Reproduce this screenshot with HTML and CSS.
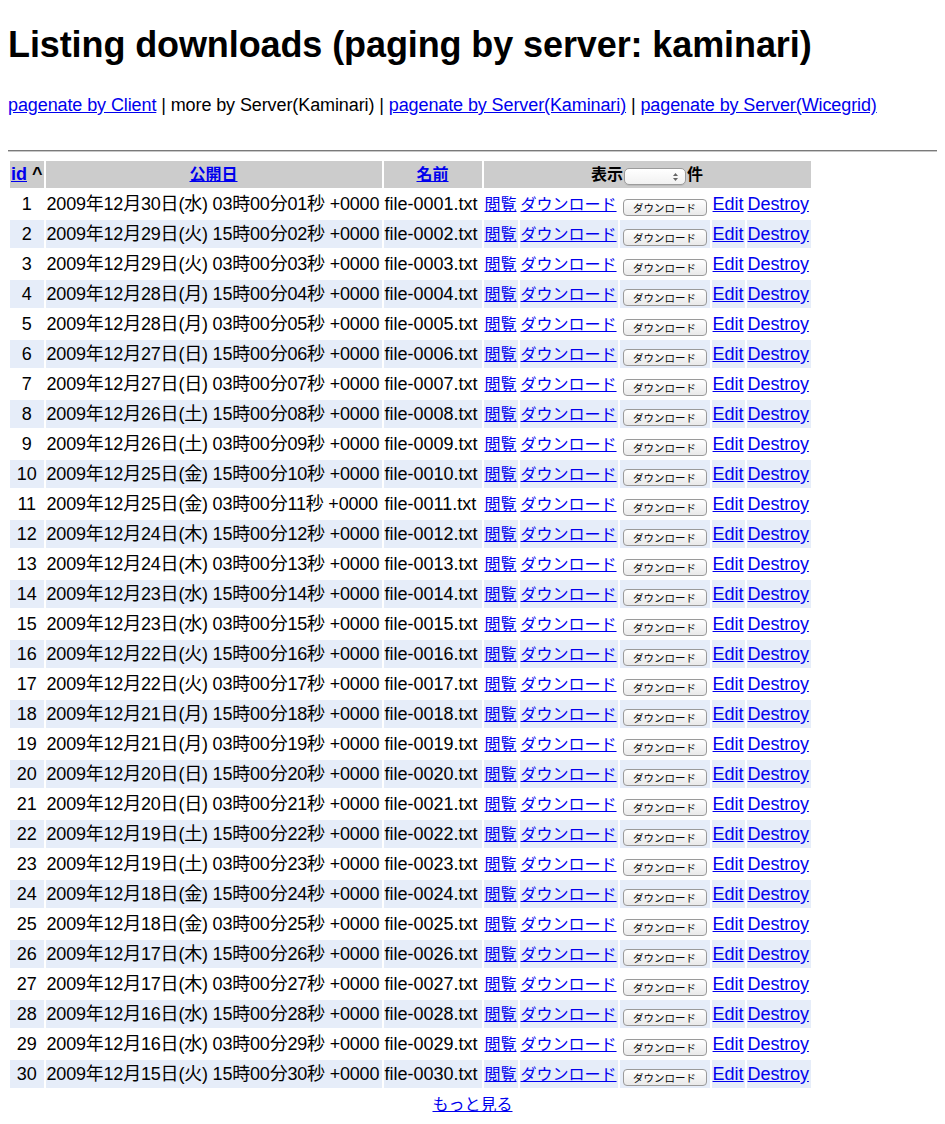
FILE: index.html
```html
<!DOCTYPE html>
<html lang="ja">
<head>
<meta charset="utf-8">
<title>Listing downloads</title>
<link rel="stylesheet" href="styles.css">
</head>
<body>
<h1 class="title">Listing downloads (paging by server: kaminari)</h1>
<p class="nav"><a href="#">pagenate by Client</a> | more by Server(Kaminari) | <a href="#">pagenate by Server(Kaminari)</a> | <a href="#">pagenate by Server(Wicegrid)</a></p>
<hr class="rule">
<table class="list">
<thead>
<tr>
<th class="h-id"><a href="#">id</a> ^</th>
<th class="h-date"><a class="ja" href="#">公開日</a></th>
<th class="h-name"><a class="ja" href="#">名前</a></th>
<th class="h-act" colspan="5"><span class="ja">表示</span><span class="sel"><span class="sel-arrows"><svg width="5" height="8" viewBox="0 0 5 8"><polygon points="0,3 2.5,0 5,3" fill="#666"/><polygon points="0,5 2.5,8 5,5" fill="#666"/></svg></span></span><span class="ja">件</span></th>
</tr>
</thead>
<tbody>
<tr class="odd"><td class="c-id">1</td><td class="c-date">2009年12月30日(水) 03時00分01秒 +0000</td><td class="c-name">file-0001.txt</td><td class="c-view"><a href="#">閲覧</a></td><td class="c-dl"><a href="#">ダウンロード</a></td><td class="c-btn"><button class="dl-btn" type="button">ダウンロード</button></td><td class="c-edit"><a href="#">Edit</a></td><td class="c-del"><a href="#">Destroy</a></td></tr>
<tr class="even"><td class="c-id">2</td><td class="c-date">2009年12月29日(火) 15時00分02秒 +0000</td><td class="c-name">file-0002.txt</td><td class="c-view"><a href="#">閲覧</a></td><td class="c-dl"><a href="#">ダウンロード</a></td><td class="c-btn"><button class="dl-btn" type="button">ダウンロード</button></td><td class="c-edit"><a href="#">Edit</a></td><td class="c-del"><a href="#">Destroy</a></td></tr>
<tr class="odd"><td class="c-id">3</td><td class="c-date">2009年12月29日(火) 03時00分03秒 +0000</td><td class="c-name">file-0003.txt</td><td class="c-view"><a href="#">閲覧</a></td><td class="c-dl"><a href="#">ダウンロード</a></td><td class="c-btn"><button class="dl-btn" type="button">ダウンロード</button></td><td class="c-edit"><a href="#">Edit</a></td><td class="c-del"><a href="#">Destroy</a></td></tr>
<tr class="even"><td class="c-id">4</td><td class="c-date">2009年12月28日(月) 15時00分04秒 +0000</td><td class="c-name">file-0004.txt</td><td class="c-view"><a href="#">閲覧</a></td><td class="c-dl"><a href="#">ダウンロード</a></td><td class="c-btn"><button class="dl-btn" type="button">ダウンロード</button></td><td class="c-edit"><a href="#">Edit</a></td><td class="c-del"><a href="#">Destroy</a></td></tr>
<tr class="odd"><td class="c-id">5</td><td class="c-date">2009年12月28日(月) 03時00分05秒 +0000</td><td class="c-name">file-0005.txt</td><td class="c-view"><a href="#">閲覧</a></td><td class="c-dl"><a href="#">ダウンロード</a></td><td class="c-btn"><button class="dl-btn" type="button">ダウンロード</button></td><td class="c-edit"><a href="#">Edit</a></td><td class="c-del"><a href="#">Destroy</a></td></tr>
<tr class="even"><td class="c-id">6</td><td class="c-date">2009年12月27日(日) 15時00分06秒 +0000</td><td class="c-name">file-0006.txt</td><td class="c-view"><a href="#">閲覧</a></td><td class="c-dl"><a href="#">ダウンロード</a></td><td class="c-btn"><button class="dl-btn" type="button">ダウンロード</button></td><td class="c-edit"><a href="#">Edit</a></td><td class="c-del"><a href="#">Destroy</a></td></tr>
<tr class="odd"><td class="c-id">7</td><td class="c-date">2009年12月27日(日) 03時00分07秒 +0000</td><td class="c-name">file-0007.txt</td><td class="c-view"><a href="#">閲覧</a></td><td class="c-dl"><a href="#">ダウンロード</a></td><td class="c-btn"><button class="dl-btn" type="button">ダウンロード</button></td><td class="c-edit"><a href="#">Edit</a></td><td class="c-del"><a href="#">Destroy</a></td></tr>
<tr class="even"><td class="c-id">8</td><td class="c-date">2009年12月26日(土) 15時00分08秒 +0000</td><td class="c-name">file-0008.txt</td><td class="c-view"><a href="#">閲覧</a></td><td class="c-dl"><a href="#">ダウンロード</a></td><td class="c-btn"><button class="dl-btn" type="button">ダウンロード</button></td><td class="c-edit"><a href="#">Edit</a></td><td class="c-del"><a href="#">Destroy</a></td></tr>
<tr class="odd"><td class="c-id">9</td><td class="c-date">2009年12月26日(土) 03時00分09秒 +0000</td><td class="c-name">file-0009.txt</td><td class="c-view"><a href="#">閲覧</a></td><td class="c-dl"><a href="#">ダウンロード</a></td><td class="c-btn"><button class="dl-btn" type="button">ダウンロード</button></td><td class="c-edit"><a href="#">Edit</a></td><td class="c-del"><a href="#">Destroy</a></td></tr>
<tr class="even"><td class="c-id">10</td><td class="c-date">2009年12月25日(金) 15時00分10秒 +0000</td><td class="c-name">file-0010.txt</td><td class="c-view"><a href="#">閲覧</a></td><td class="c-dl"><a href="#">ダウンロード</a></td><td class="c-btn"><button class="dl-btn" type="button">ダウンロード</button></td><td class="c-edit"><a href="#">Edit</a></td><td class="c-del"><a href="#">Destroy</a></td></tr>
<tr class="odd"><td class="c-id">11</td><td class="c-date">2009年12月25日(金) 03時00分11秒 +0000</td><td class="c-name">file-0011.txt</td><td class="c-view"><a href="#">閲覧</a></td><td class="c-dl"><a href="#">ダウンロード</a></td><td class="c-btn"><button class="dl-btn" type="button">ダウンロード</button></td><td class="c-edit"><a href="#">Edit</a></td><td class="c-del"><a href="#">Destroy</a></td></tr>
<tr class="even"><td class="c-id">12</td><td class="c-date">2009年12月24日(木) 15時00分12秒 +0000</td><td class="c-name">file-0012.txt</td><td class="c-view"><a href="#">閲覧</a></td><td class="c-dl"><a href="#">ダウンロード</a></td><td class="c-btn"><button class="dl-btn" type="button">ダウンロード</button></td><td class="c-edit"><a href="#">Edit</a></td><td class="c-del"><a href="#">Destroy</a></td></tr>
<tr class="odd"><td class="c-id">13</td><td class="c-date">2009年12月24日(木) 03時00分13秒 +0000</td><td class="c-name">file-0013.txt</td><td class="c-view"><a href="#">閲覧</a></td><td class="c-dl"><a href="#">ダウンロード</a></td><td class="c-btn"><button class="dl-btn" type="button">ダウンロード</button></td><td class="c-edit"><a href="#">Edit</a></td><td class="c-del"><a href="#">Destroy</a></td></tr>
<tr class="even"><td class="c-id">14</td><td class="c-date">2009年12月23日(水) 15時00分14秒 +0000</td><td class="c-name">file-0014.txt</td><td class="c-view"><a href="#">閲覧</a></td><td class="c-dl"><a href="#">ダウンロード</a></td><td class="c-btn"><button class="dl-btn" type="button">ダウンロード</button></td><td class="c-edit"><a href="#">Edit</a></td><td class="c-del"><a href="#">Destroy</a></td></tr>
<tr class="odd"><td class="c-id">15</td><td class="c-date">2009年12月23日(水) 03時00分15秒 +0000</td><td class="c-name">file-0015.txt</td><td class="c-view"><a href="#">閲覧</a></td><td class="c-dl"><a href="#">ダウンロード</a></td><td class="c-btn"><button class="dl-btn" type="button">ダウンロード</button></td><td class="c-edit"><a href="#">Edit</a></td><td class="c-del"><a href="#">Destroy</a></td></tr>
<tr class="even"><td class="c-id">16</td><td class="c-date">2009年12月22日(火) 15時00分16秒 +0000</td><td class="c-name">file-0016.txt</td><td class="c-view"><a href="#">閲覧</a></td><td class="c-dl"><a href="#">ダウンロード</a></td><td class="c-btn"><button class="dl-btn" type="button">ダウンロード</button></td><td class="c-edit"><a href="#">Edit</a></td><td class="c-del"><a href="#">Destroy</a></td></tr>
<tr class="odd"><td class="c-id">17</td><td class="c-date">2009年12月22日(火) 03時00分17秒 +0000</td><td class="c-name">file-0017.txt</td><td class="c-view"><a href="#">閲覧</a></td><td class="c-dl"><a href="#">ダウンロード</a></td><td class="c-btn"><button class="dl-btn" type="button">ダウンロード</button></td><td class="c-edit"><a href="#">Edit</a></td><td class="c-del"><a href="#">Destroy</a></td></tr>
<tr class="even"><td class="c-id">18</td><td class="c-date">2009年12月21日(月) 15時00分18秒 +0000</td><td class="c-name">file-0018.txt</td><td class="c-view"><a href="#">閲覧</a></td><td class="c-dl"><a href="#">ダウンロード</a></td><td class="c-btn"><button class="dl-btn" type="button">ダウンロード</button></td><td class="c-edit"><a href="#">Edit</a></td><td class="c-del"><a href="#">Destroy</a></td></tr>
<tr class="odd"><td class="c-id">19</td><td class="c-date">2009年12月21日(月) 03時00分19秒 +0000</td><td class="c-name">file-0019.txt</td><td class="c-view"><a href="#">閲覧</a></td><td class="c-dl"><a href="#">ダウンロード</a></td><td class="c-btn"><button class="dl-btn" type="button">ダウンロード</button></td><td class="c-edit"><a href="#">Edit</a></td><td class="c-del"><a href="#">Destroy</a></td></tr>
<tr class="even"><td class="c-id">20</td><td class="c-date">2009年12月20日(日) 15時00分20秒 +0000</td><td class="c-name">file-0020.txt</td><td class="c-view"><a href="#">閲覧</a></td><td class="c-dl"><a href="#">ダウンロード</a></td><td class="c-btn"><button class="dl-btn" type="button">ダウンロード</button></td><td class="c-edit"><a href="#">Edit</a></td><td class="c-del"><a href="#">Destroy</a></td></tr>
<tr class="odd"><td class="c-id">21</td><td class="c-date">2009年12月20日(日) 03時00分21秒 +0000</td><td class="c-name">file-0021.txt</td><td class="c-view"><a href="#">閲覧</a></td><td class="c-dl"><a href="#">ダウンロード</a></td><td class="c-btn"><button class="dl-btn" type="button">ダウンロード</button></td><td class="c-edit"><a href="#">Edit</a></td><td class="c-del"><a href="#">Destroy</a></td></tr>
<tr class="even"><td class="c-id">22</td><td class="c-date">2009年12月19日(土) 15時00分22秒 +0000</td><td class="c-name">file-0022.txt</td><td class="c-view"><a href="#">閲覧</a></td><td class="c-dl"><a href="#">ダウンロード</a></td><td class="c-btn"><button class="dl-btn" type="button">ダウンロード</button></td><td class="c-edit"><a href="#">Edit</a></td><td class="c-del"><a href="#">Destroy</a></td></tr>
<tr class="odd"><td class="c-id">23</td><td class="c-date">2009年12月19日(土) 03時00分23秒 +0000</td><td class="c-name">file-0023.txt</td><td class="c-view"><a href="#">閲覧</a></td><td class="c-dl"><a href="#">ダウンロード</a></td><td class="c-btn"><button class="dl-btn" type="button">ダウンロード</button></td><td class="c-edit"><a href="#">Edit</a></td><td class="c-del"><a href="#">Destroy</a></td></tr>
<tr class="even"><td class="c-id">24</td><td class="c-date">2009年12月18日(金) 15時00分24秒 +0000</td><td class="c-name">file-0024.txt</td><td class="c-view"><a href="#">閲覧</a></td><td class="c-dl"><a href="#">ダウンロード</a></td><td class="c-btn"><button class="dl-btn" type="button">ダウンロード</button></td><td class="c-edit"><a href="#">Edit</a></td><td class="c-del"><a href="#">Destroy</a></td></tr>
<tr class="odd"><td class="c-id">25</td><td class="c-date">2009年12月18日(金) 03時00分25秒 +0000</td><td class="c-name">file-0025.txt</td><td class="c-view"><a href="#">閲覧</a></td><td class="c-dl"><a href="#">ダウンロード</a></td><td class="c-btn"><button class="dl-btn" type="button">ダウンロード</button></td><td class="c-edit"><a href="#">Edit</a></td><td class="c-del"><a href="#">Destroy</a></td></tr>
<tr class="even"><td class="c-id">26</td><td class="c-date">2009年12月17日(木) 15時00分26秒 +0000</td><td class="c-name">file-0026.txt</td><td class="c-view"><a href="#">閲覧</a></td><td class="c-dl"><a href="#">ダウンロード</a></td><td class="c-btn"><button class="dl-btn" type="button">ダウンロード</button></td><td class="c-edit"><a href="#">Edit</a></td><td class="c-del"><a href="#">Destroy</a></td></tr>
<tr class="odd"><td class="c-id">27</td><td class="c-date">2009年12月17日(木) 03時00分27秒 +0000</td><td class="c-name">file-0027.txt</td><td class="c-view"><a href="#">閲覧</a></td><td class="c-dl"><a href="#">ダウンロード</a></td><td class="c-btn"><button class="dl-btn" type="button">ダウンロード</button></td><td class="c-edit"><a href="#">Edit</a></td><td class="c-del"><a href="#">Destroy</a></td></tr>
<tr class="even"><td class="c-id">28</td><td class="c-date">2009年12月16日(水) 15時00分28秒 +0000</td><td class="c-name">file-0028.txt</td><td class="c-view"><a href="#">閲覧</a></td><td class="c-dl"><a href="#">ダウンロード</a></td><td class="c-btn"><button class="dl-btn" type="button">ダウンロード</button></td><td class="c-edit"><a href="#">Edit</a></td><td class="c-del"><a href="#">Destroy</a></td></tr>
<tr class="odd"><td class="c-id">29</td><td class="c-date">2009年12月16日(水) 03時00分29秒 +0000</td><td class="c-name">file-0029.txt</td><td class="c-view"><a href="#">閲覧</a></td><td class="c-dl"><a href="#">ダウンロード</a></td><td class="c-btn"><button class="dl-btn" type="button">ダウンロード</button></td><td class="c-edit"><a href="#">Edit</a></td><td class="c-del"><a href="#">Destroy</a></td></tr>
<tr class="even"><td class="c-id">30</td><td class="c-date">2009年12月15日(火) 15時00分30秒 +0000</td><td class="c-name">file-0030.txt</td><td class="c-view"><a href="#">閲覧</a></td><td class="c-dl"><a href="#">ダウンロード</a></td><td class="c-btn"><button class="dl-btn" type="button">ダウンロード</button></td><td class="c-edit"><a href="#">Edit</a></td><td class="c-del"><a href="#">Destroy</a></td></tr>
</tbody>
</table>
<div class="more"><a href="#">もっと見る</a></div>
</body>
</html>
```

FILE: styles.css
```css
html, body {
  margin: 0;
  padding: 0;
  background: #fff;
}
body {
  padding: 0 8px;
  color: #000;
  font-family: "Liberation Sans", "Noto Sans CJK JP", Arial, sans-serif;
  font-size: 18px;
}
a {
  color: #0000ee;
  text-decoration: underline;
}
.ja {
  font-size: 16px;
  line-height: 16px;
}
.title {
  margin: 24px 0 0;
  font-size: 36px;
  font-weight: bold;
  line-height: 41px;
  letter-spacing: -0.1px;
}
.nav {
  margin: 30px 0 0;
  line-height: 21px;
  letter-spacing: -0.1px;
}
.rule {
  margin: 34px 0 0;
  height: 0;
  border: 0;
  border-top: 1px solid #7a7a7a;
  border-bottom: 1px solid #c8c8c8;
}
.list {
  margin-top: 7px;
  border-collapse: separate;
  border-spacing: 2px;
}
.list th,
.list td {
  padding: 1px;
  white-space: nowrap;
}
.list th {
  background: #cccccc;
  font-weight: bold;
  line-height: 25px;
  height: 25px;
  text-align: center;
}
.list td {
  line-height: 26px;
  height: 26px;
  text-align: left;
}
.list tr.even td {
  background: #e6edf9;
}
.list th.h-id { text-align: left; width: 30px; }
.c-id { width: 30px; }
.list td.c-id { text-align: center; }
.c-date { width: 334px; letter-spacing: -0.2px; }
.c-name { width: 96px; }
.c-view { width: 30px; }
.c-dl { width: 96px; }
.c-view a,
.c-dl a,
.more a {
  font-size: 16px;
  line-height: 16px;
}
.c-btn { width: 86px; }
.c-edit { width: 30px; }
.c-del { width: 62px; letter-spacing: -0.1px; }

.sel {
  display: inline-block;
  box-sizing: border-box;
  width: 62px;
  height: 17px;
  margin: 0 1px;
  overflow: hidden;
  vertical-align: -5px;
  border: 1px solid #9c9c9c;
  border-radius: 5px;
  background: linear-gradient(#ffffff, #f1f1f1);
  box-shadow: 0 1px 0 rgba(0,0,0,0.08);
}
.sel-arrows {
  display: flex;
  justify-content: flex-end;
  align-items: center;
  height: 100%;
  padding-right: 7px;
}
.sel-arrows svg {
  display: block;
}
.dl-btn {
  box-sizing: border-box;
  width: 84px;
  height: 17px;
  margin: 0 2px;
  padding: 0;
  border: 1px solid #9a9a9a;
  border-radius: 4px;
  background: linear-gradient(#ffffff, #e9e9e9);
  color: #000;
  font-family: "Noto Sans CJK JP", sans-serif;
  font-size: 10.5px;
  line-height: 15px;
  vertical-align: -2px;
}
.more {
  text-align: center;
  line-height: 26px;
  margin-top: 1px;
}
```
